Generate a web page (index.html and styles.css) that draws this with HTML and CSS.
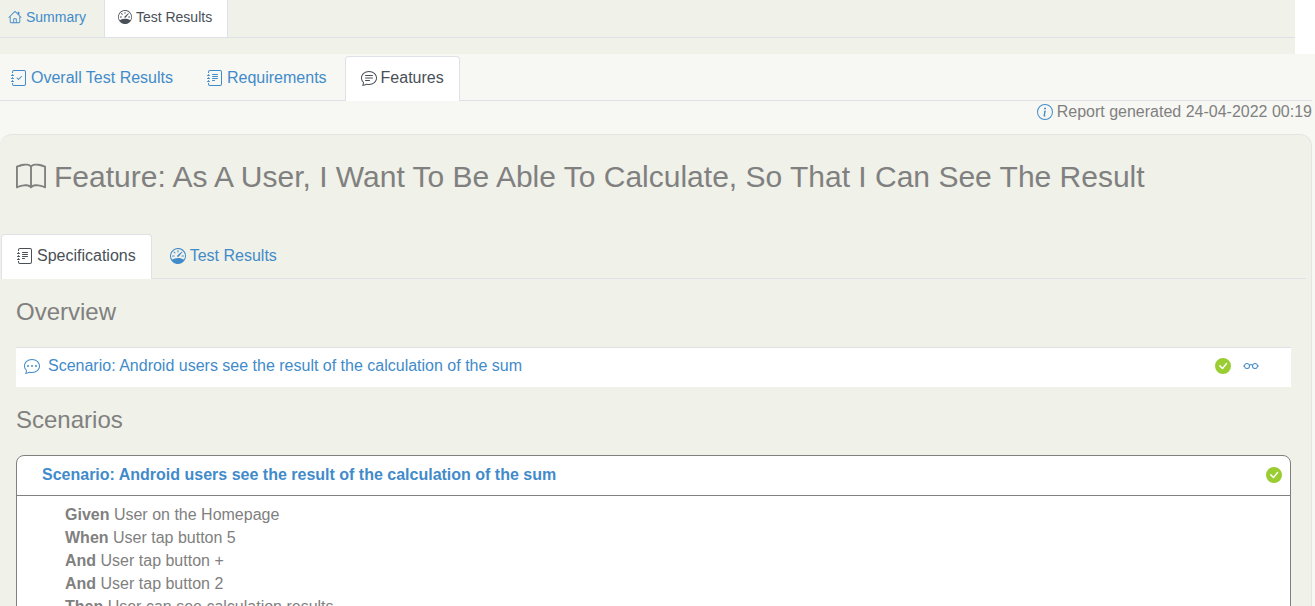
FILE: index.html
```html
<!DOCTYPE html>
<html lang="en">
<head>
<meta charset="utf-8">
<title>Test Results</title>
<link rel="stylesheet" href="styles.css">
</head>
<body>
<svg class="sprite" aria-hidden="true">
  <symbol id="house" viewBox="0 0 16 16"><path fill-rule="evenodd" d="M2 13.5V7h1v6.5a.5.5 0 0 0 .5.5h9a.5.5 0 0 0 .5-.5V7h1v6.5a1.5 1.5 0 0 1-1.5 1.5h-9A1.5 1.5 0 0 1 2 13.5zm11-11V6l-2-2V2.500a.5.5 0 0 1 .5-.5h1a.5.5 0 0 1 .5.5z"/><path fill-rule="evenodd" d="M7.293 1.500a1 1 0 0 1 1.414 0l6.647 6.646a.5.5 0 0 1-.708.708L8 2.207 1.354 8.854a.5.5 0 1 1-.708-.708L7.293 1.500z"/><path d="M6 14.500V10.500a1 1 0 0 1 1-1h2a1 1 0 0 1 1 1v4H9v-4H7v4z"/></symbol>
  <symbol id="gauge" viewBox="0 0 16 16"><path d="M8 2a.5.5 0 0 1 .5.5V4a.5.5 0 0 1-1 0V2.500A.5.5 0 0 1 8 2zM3.732 3.732a.5.5 0 0 1 .707 0l.915.914a.5.5 0 1 1-.708.708l-.914-.915a.5.5 0 0 1 0-.707zM2 8a.5.5 0 0 1 .5-.5h1.586a.5.5 0 0 1 0 1H2.500A.5.5 0 0 1 2 8zm9.500 0a.5.5 0 0 1 .5-.5h1.500a.5.5 0 0 1 0 1H12a.5.5 0 0 1-.5-.5zm.754-4.246a.389.389 0 0 0-.527-.020L7.547 7.310A.91.91 0 1 0 8.850 8.569l3.434-4.297a.389.389 0 0 0-.029-.518z"/><path fill-rule="evenodd" d="M6.664 15.889A8 8 0 1 1 9.336.110a8 8 0 0 1-2.672 15.780zm-4.665-4.283A11.945 11.945 0 0 1 8 10c2.186 0 4.236.585 6.001 1.606a7 7 0 1 0-12.002 0z"/></symbol>
  <symbol id="journal-edge" viewBox="0 0 16 16"><path d="M3 0h10a2 2 0 0 1 2 2v12a2 2 0 0 1-2 2H3a2 2 0 0 1-2-2v-1h1v1a1 1 0 0 0 1 1h10a1 1 0 0 0 1-1V2a1 1 0 0 0-1-1H3a1 1 0 0 0-1 1v1H1V2a2 2 0 0 1 2-2z"/><path d="M1 5v-.5a.5.5 0 0 1 1 0V5h.5a.5.5 0 0 1 0 1h-2a.5.5 0 0 1 0-1H1zm0 3v-.5a.5.5 0 0 1 1 0V8h.5a.5.5 0 0 1 0 1h-2a.5.5 0 0 1 0-1H1zm0 3v-.5a.5.5 0 0 1 1 0v.5h.5a.5.5 0 0 1 0 1h-2a.5.5 0 0 1 0-1H1z"/></symbol>
  <symbol id="journal-check" viewBox="0 0 16 16"><use href="#journal-edge"/><path d="M10.854 6.146a.5.5 0 0 1 0 .708l-3 3a.5.5 0 0 1-.708 0l-1.500-1.500a.5.5 0 1 1 .708-.708L7.500 8.793l2.646-2.647a.5.5 0 0 1 .708 0z"/></symbol>
  <symbol id="journal-text" viewBox="0 0 16 16"><use href="#journal-edge"/><path d="M5 10.500a.5.5 0 0 1 .5-.5h2a.5.5 0 0 1 0 1h-2a.5.5 0 0 1-.5-.5zm0-2a.5.5 0 0 1 .5-.5h5a.5.5 0 0 1 0 1h-5a.5.5 0 0 1-.5-.5zm0-2a.5.5 0 0 1 .5-.5h5a.5.5 0 0 1 0 1h-5a.5.5 0 0 1-.5-.5zm0-2a.5.5 0 0 1 .5-.5h5a.5.5 0 0 1 0 1h-5a.5.5 0 0 1-.5-.5z"/></symbol>
  <symbol id="bubble" viewBox="0 0 16 16"><path d="M2.678 11.894a1 1 0 0 1 .287.801 10.970 10.970 0 0 1-.398 2c1.395-.323 2.247-.697 2.634-.893a1 1 0 0 1 .710-.074A8.060 8.060 0 0 0 8 14c3.996 0 7-2.807 7-6 0-3.192-3.004-6-7-6S1 4.808 1 8c0 1.468.617 2.830 1.678 3.894zm-.493 3.905a21.682 21.682 0 0 1-.713.129c-.2.032-.352-.176-.273-.362a9.680 9.680 0 0 0 .244-.637l.003-.010c.248-.720.450-1.548.524-2.319C.743 11.370 0 9.760 0 8c0-3.866 3.582-7 8-7s8 3.134 8 7-3.582 7-8 7a9.060 9.060 0 0 1-2.347-.306c-.520.263-1.639.742-3.468 1.105z"/></symbol>
  <symbol id="chat-text" viewBox="0 0 16 16"><use href="#bubble"/><path d="M4 5.500a.5.5 0 0 1 .5-.5h7a.5.5 0 0 1 0 1h-7a.5.5 0 0 1-.5-.5zM4 8a.5.5 0 0 1 .5-.5h7a.5.5 0 0 1 0 1h-7A.5.5 0 0 1 4 8zm0 2.500a.5.5 0 0 1 .5-.5h4a.5.5 0 0 1 0 1h-4a.5.5 0 0 1-.5-.5z"/></symbol>
  <symbol id="chat-dots" viewBox="0 0 16 16"><use href="#bubble"/><circle cx="4" cy="8" r="1"/><circle cx="8" cy="8" r="1"/><circle cx="12" cy="8" r="1"/></symbol>
  <symbol id="info" viewBox="0 0 16 16"><path d="M8 15A7 7 0 1 1 8 1a7 7 0 0 1 0 14zm0 1A8 8 0 1 0 8 0a8 8 0 0 0 0 16z"/><path d="m8.930 6.588-2.290.287-.082.380.450.083c.294.070.352.176.288.469l-.738 3.468c-.194.897.105 1.319.808 1.319.545 0 1.178-.252 1.465-.598l.088-.416c-.2.176-.492.246-.686.246-.275 0-.375-.193-.304-.533L8.930 6.588zM9 4.500a1 1 0 1 1-2 0 1 1 0 0 1 2 0z"/></symbol>
  <symbol id="book" viewBox="0 0 16 16"><path d="M1 2.828c.885-.370 2.154-.769 3.388-.893 1.330-.134 2.458.063 3.112.752v9.746c-.935-.530-2.120-.603-3.213-.493-1.180.120-2.370.461-3.287.811V2.828zm7.500-.141c.654-.689 1.782-.886 3.112-.752 1.234.124 2.503.523 3.388.893v9.923c-.918-.350-2.107-.692-3.287-.810-1.094-.111-2.278-.039-3.213.492V2.687zM8 1.783C7.015.936 5.587.810 4.287.940c-1.514.153-3.042.672-3.994 1.105A.5.5 0 0 0 0 2.500v11a.5.5 0 0 0 .707.455c.882-.400 2.303-.881 3.680-1.020 1.409-.142 2.590.087 3.223.877a.5.5 0 0 0 .780 0c.633-.790 1.814-1.019 3.222-.877 1.378.139 2.800.620 3.681 1.020A.5.5 0 0 0 16 13.500v-11a.5.5 0 0 0-.293-.455c-.952-.433-2.480-.952-3.994-1.105C10.413.809 8.985.936 8 1.783z"/></symbol>
  <symbol id="check" viewBox="0 0 16 16"><path d="M16 8A8 8 0 1 1 0 8a8 8 0 0 1 16 0zm-3.970-3.030a.75.75 0 0 0-1.080.022L7.477 9.417 5.384 7.323a.75.75 0 0 0-1.060 1.060L6.970 11.030a.75.75 0 0 0 1.079-.020l3.992-4.990a.75.75 0 0 0-.010-1.050z"/></symbol>
  <symbol id="glasses" viewBox="0 0 16 16"><path d="M4 6a2 2 0 1 1 0 4 2 2 0 0 1 0-4zm2.625.547a3 3 0 0 0-5.584.953H.5a.5.5 0 0 0 0 1h.541A3 3 0 0 0 7 8a1 1 0 0 1 2 0 3 3 0 0 0 5.959.5h.541a.5.5 0 0 0 0-1h-.541a3 3 0 0 0-5.584-.953A1.993 1.993 0 0 0 8 6c-.532 0-1.016.208-1.375.547zM14 8a2 2 0 1 1-4 0 2 2 0 0 1 4 0z"/></symbol>
</svg>

<nav class="top-nav" aria-label="Report">
  <a class="top-tab" href="#summary"><svg class="icon-small"><use href="#house"/></svg>Summary</a>
  <a class="top-tab top-tab-active" href="#results" aria-current="page"><svg class="icon-small"><use href="#gauge"/></svg>Test Results</a>
</nav>

<main class="report">
  <nav class="tabs report-tabs" aria-label="Results">
    <a class="tab" href="#overall"><svg class="icon"><use href="#journal-check"/></svg>Overall Test Results</a>
    <a class="tab" href="#requirements"><svg class="icon"><use href="#journal-text"/></svg>Requirements</a>
    <a class="tab tab-active" href="#features" aria-current="page"><svg class="icon"><use href="#chat-text"/></svg>Features</a>
  </nav>
  <p class="generated"><svg class="icon icon-link"><use href="#info"/></svg>Report generated 24-04-2022 00:19</p>

  <section class="feature">
    <h1 class="feature-title"><svg class="icon-book"><use href="#book"/></svg>Feature: As A User, I Want To Be Able To Calculate, So That I Can See The Result</h1>
    <nav class="tabs feature-tabs" aria-label="Feature">
      <a class="tab tab-active" href="#specifications" aria-current="page"><svg class="icon"><use href="#journal-text"/></svg>Specifications</a>
      <a class="tab" href="#feature-results"><svg class="icon"><use href="#gauge"/></svg>Test Results</a>
    </nav>
    <div class="feature-body">
      <h2 class="heading">Overview</h2>
      <div class="overview-row">
        <a class="overview-link" href="#scenario"><svg class="icon"><use href="#chat-dots"/></svg>Scenario: Android users see the result of the calculation of the sum</a>
        <svg class="icon icon-pass" role="img" aria-label="Passed"><use href="#check"/></svg>
        <a class="details-link" href="#scenario" aria-label="Details"><svg class="icon"><use href="#glasses"/></svg></a>
      </div>
      <h2 class="heading">Scenarios</h2>
      <article class="scenario" id="scenario">
        <h3 class="scenario-header"><a href="#scenario">Scenario: Android users see the result of the calculation of the sum</a><svg class="icon icon-pass" role="img" aria-label="Passed"><use href="#check"/></svg></h3>
        <ul class="steps">
          <li><b>Given</b> User on the Homepage</li>
          <li><b>When</b> User tap button 5</li>
          <li><b>And</b> User tap button +</li>
          <li><b>And</b> User tap button 2</li>
          <li><b>Then</b> User can see calculation results</li>
        </ul>
      </article>
    </div>
  </section>
</main>
</body>
</html>
```
FILE: styles.css
```css
* {
  box-sizing: border-box;
}

body {
  margin: 0;
  height: 100vh;
  overflow: hidden;
  background: #fff;
  color: #808080;
  font: 16px/24px "Liberation Sans", Arial, sans-serif;
}

a {
  color: #428bca;
  text-decoration: none;
}

svg {
  fill: currentColor;
  flex: none;
}

.sprite {
  position: absolute;
  width: 0;
  height: 0;
}

.icon {
  width: 16px;
  height: 16px;
}

.icon-small {
  width: 14px;
  height: 14px;
}

.icon-link {
  color: #428bca;
}

.icon-pass {
  color: #9acd32;
}

.top-nav {
  display: flex;
  margin-right: 20px;
  padding-bottom: 16px;
  background: linear-gradient(#dee2e6, #dee2e6) 0 37px / 100% 1px no-repeat #f0f1e8;
}

.top-tab {
  display: flex;
  align-items: center;
  gap: 4px;
  height: 38px;
  padding: 0 18px 4px 8px;
  font-size: 14px;
}

.top-tab-active {
  height: 37px;
  padding: 0 15px 3px 13px;
  border: solid #dee2e6;
  border-width: 0 1px;
  background: #fff;
  color: #495057;
}

.report {
  padding-right: 3px;
  background: #f7f8f3;
}

.tabs {
  display: flex;
  gap: 2px;
  padding-top: 2px;
  border-bottom: 1px solid #dee2e6;
}

.tab {
  display: flex;
  align-items: center;
  gap: 4px;
  height: 44px;
  padding: 0 15px 2px;
  border: 1px solid transparent;
  border-bottom: 0;
  border-radius: 4px 4px 0 0;
}

.report-tabs .tab:first-child {
  padding-left: 10px;
}

.tab-active {
  height: 45px;
  margin-bottom: -1px;
  padding-bottom: 3px;
  border-color: #dee2e6;
  background: #fff;
  color: #495057;
}

.generated {
  display: flex;
  justify-content: flex-end;
  align-items: center;
  gap: 4px;
  height: 22px;
  margin: 0 0 11px;
}

.feature {
  border: 1px solid #e3e5e0;
  border-left: 0;
  border-radius: 12px 12px 0 0;
  background: #f0f1e8;
}

.feature-title {
  display: flex;
  align-items: center;
  gap: 8px;
  margin: 0;
  padding: 23px 16px 36px;
  font-size: 30px;
  font-weight: 400;
  line-height: 38px;
}

.icon-book {
  width: 30px;
  height: 30px;
}

.feature-tabs {
  margin: 0 5px 0 1px;
}

.feature-body {
  padding: 18px 20px 20px 16px;
}

.heading {
  margin: 0;
  font-size: 24px;
  font-weight: 400;
  line-height: 30px;
}

.overview-row {
  display: flex;
  align-items: center;
  gap: 12px;
  height: 40px;
  margin: 20px 0 18px;
  padding: 0 32px 3px 8px;
  border-top: 1px solid #dee2e6;
  background: #fff;
}

.overview-link {
  display: flex;
  flex: 1;
  align-items: center;
  gap: 8px;
}

.details-link {
  display: flex;
}

.scenario {
  margin-top: 20px;
  border: 1px solid #808080;
  border-radius: 8px;
  background: #fff;
}

.scenario-header {
  display: flex;
  align-items: center;
  justify-content: space-between;
  height: 40px;
  margin: 0;
  padding: 0 8px 2px 25px;
  border-bottom: 1px solid #808080;
  font-size: 16px;
}

.steps {
  margin: 0;
  padding: 7px 48px 16px;
  line-height: 23px;
  list-style: none;
}
```
